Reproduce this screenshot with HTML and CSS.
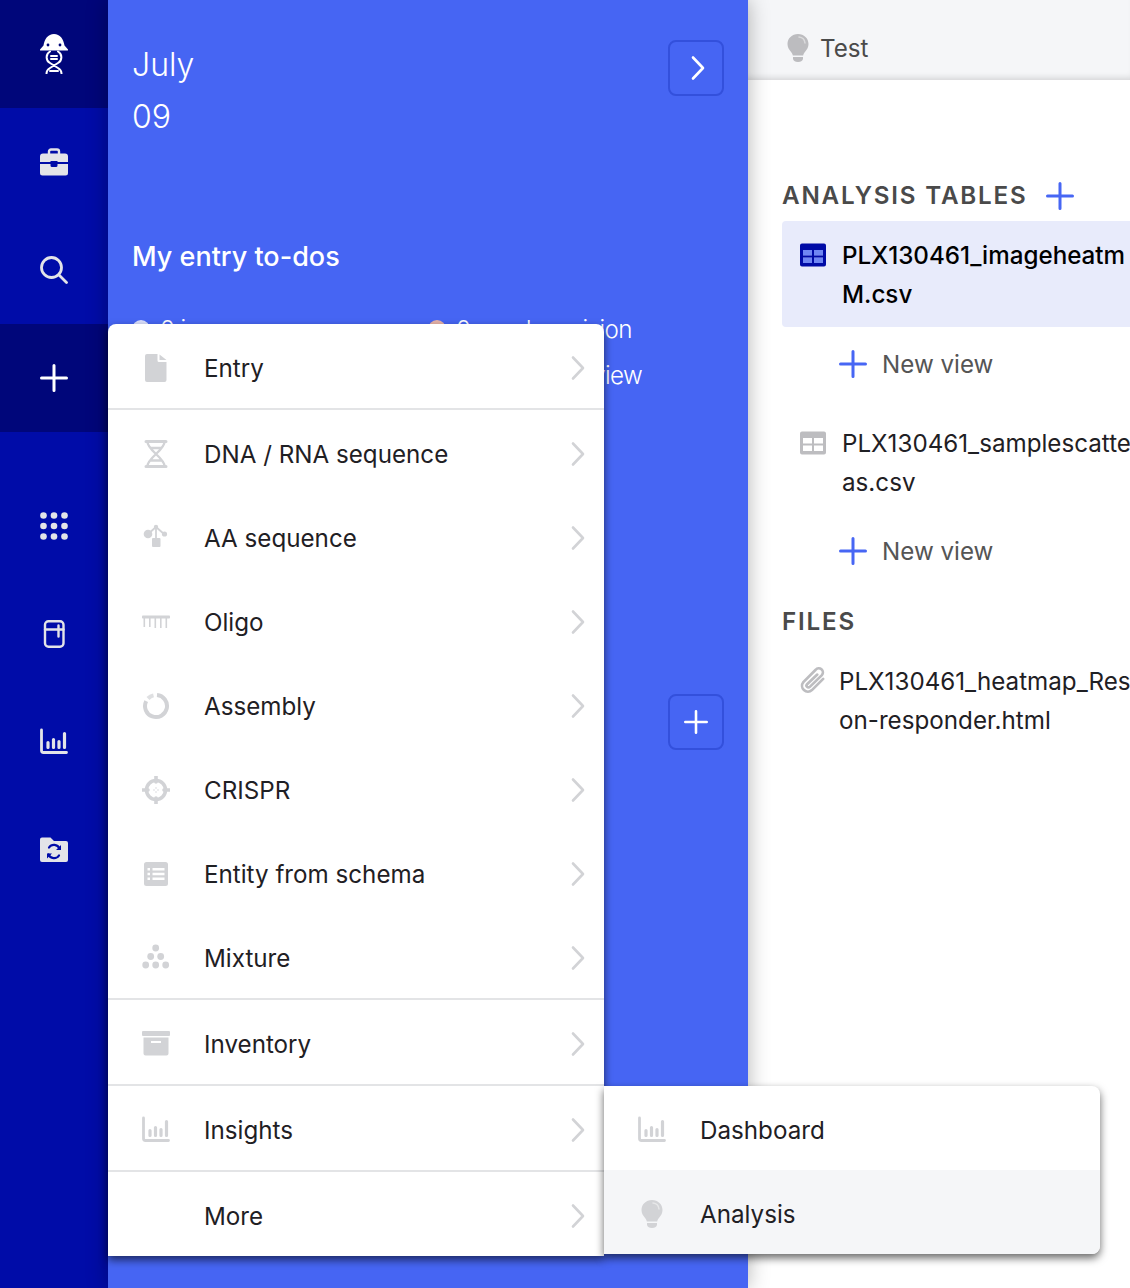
FILE: index.html
```html
<!DOCTYPE html>
<html lang="en">
<head>
<meta charset="utf-8">
<title>Analysis</title>
<link rel="stylesheet" href="styles.css">
</head>
<body>
<svg class="defs" aria-hidden="true">
  <symbol id="chev" viewBox="0 0 28 28"><path d="M9 3.500 19 14 9 24.500" fill="none" stroke="currentColor" stroke-width="2.600" stroke-linecap="round" stroke-linejoin="round"/></symbol>
  <symbol id="plus" viewBox="0 0 28 28"><path d="M14 1.500v25M1.500 14h25" fill="none" stroke="currentColor" stroke-width="3" stroke-linecap="round"/></symbol>
  <symbol id="chart" viewBox="0 0 28 28"><path d="M1.500 2v20.500a2 2 0 0 0 2 2h23" fill="none" stroke="currentColor" stroke-width="2.800" stroke-linecap="round"/><path d="M8 14.500v5M13.500 11.500v8M19 13.500v6M24.500 5.500v14" fill="none" stroke="currentColor" stroke-width="3.200" stroke-linecap="round"/></symbol>
  <symbol id="bulb" viewBox="0 0 28 28"><path d="M14 0c6 0 10.500 4.400 10.500 10 0 3.300-1.500 5.400-3 7.300-1.100 1.400-2 2.700-2.300 4.200H8.800c-.3-1.500-1.200-2.800-2.300-4.200-1.500-1.900-3-4-3-7.300C3.500 4.400 8 0 14 0z" fill="currentColor"/><path d="M9 23h10v1.500c0 2-2 3.500-5 3.500s-5-1.500-5-3.500z" fill="currentColor"/><path d="M15 3c3.300.3 5.700 2.900 6 6" fill="none" stroke="#fff" stroke-opacity=".45" stroke-width="1.500" stroke-linecap="round"/></symbol>
  <symbol id="table" viewBox="0 0 28 28"><path fill-rule="evenodd" d="M3 2.500h22a2 2 0 0 1 2 2v19a2 2 0 0 1-2 2H3a2 2 0 0 1-2-2v-19a2 2 0 0 1 2-2zM4 9v5.500h9V9zm11 0v5.500h9V9zM4 16.500V22h9v-5.500zm11 0V22h9v-5.500z" fill="currentColor"/></symbol>
</svg>

<div class="app">
  <nav class="rail">
    <a class="rail-item dark">
      <svg class="logo" viewBox="0 0 28 40"><path d="M14 0C8 0 4.500 5 3.500 11.500L0 15.500c-.3.500 0 1 .6 1h26.800c.6 0 .9-.5.600-1l-3.500-4C23.500 5 20 0 14 0z" fill="#fff"/><circle cx="8" cy="11" r="1.400" fill="#00067a"/><circle cx="20" cy="11" r="1.400" fill="#00067a"/><path d="M10 17.500C5.500 20 5.500 26.500 10 29l8 5c2.500 1.500 3.500 3 3.500 5.500M18 17.500c4.500 2.500 4.500 9 0 11.500l-8 5c-2.500 1.500-3.500 3-3.500 5.500M11 22h6M11 25h6M10 37h8" fill="none" stroke="#fff" stroke-width="2" stroke-linecap="round"/></svg>
    </a>
    <a class="rail-item">
      <svg class="icon" viewBox="0 0 28 28"><path d="M9 6V3.500a2 2 0 0 1 2-2h6a2 2 0 0 1 2 2V6" fill="none" stroke="currentColor" stroke-width="2.400"/><path d="M3 5.500h22a3 3 0 0 1 3 3V14H17.500v-1h-7v1H0V8.500a3 3 0 0 1 3-3zM0 16h10.500v1.500a1.500 1.500 0 0 0 1.500 1.500h4a1.500 1.500 0 0 0 1.500-1.500V16H28v9a2.500 2.500 0 0 1-2.500 2.500h-23A2.500 2.500 0 0 1 0 25z" fill="currentColor"/></svg>
    </a>
    <a class="rail-item">
      <svg class="icon" viewBox="0 0 28 28"><circle cx="11.500" cy="11.500" r="10" fill="none" stroke="currentColor" stroke-width="2.800"/><path d="M19 19l7.500 7.500" fill="none" stroke="currentColor" stroke-width="2.800" stroke-linecap="round"/></svg>
    </a>
    <a class="rail-item dark">
      <svg class="icon plus-icon"><use href="#plus"/></svg>
    </a>
    <a class="rail-item first-tool">
      <svg class="icon" viewBox="0 0 28 28" fill="currentColor"><circle cx="3.500" cy="3.500" r="3.300"/><circle cx="14" cy="3.500" r="3.300"/><circle cx="24.500" cy="3.500" r="3.300"/><circle cx="3.500" cy="14" r="3.300"/><circle cx="14" cy="14" r="3.300"/><circle cx="24.500" cy="14" r="3.300"/><circle cx="3.500" cy="24.500" r="3.300"/><circle cx="14" cy="24.500" r="3.300"/><circle cx="24.500" cy="24.500" r="3.300"/></svg>
    </a>
    <a class="rail-item">
      <svg class="icon" viewBox="0 0 28 28" fill="none" stroke="currentColor" stroke-width="2.400" stroke-linecap="round"><rect x="5" y="1.200" width="18.500" height="25.600" rx="3.500"/><path d="M5 9.500h18.500M18.500 5.500v11"/></svg>
    </a>
    <a class="rail-item">
      <svg class="icon"><use href="#chart"/></svg>
    </a>
    <a class="rail-item">
      <svg class="icon" viewBox="0 0 28 28"><path d="M2 1.500h8.500l3.500 3.500H26a2 2 0 0 1 2 2V24a2 2 0 0 1-2 2H2a2 2 0 0 1-2-2V3.500a2 2 0 0 1 2-2z" fill="currentColor"/><path d="M19.500 12.500a6 6 0 0 0-10.500-1M8.500 18.500a6 6 0 0 0 10.500 1" fill="none" stroke="#000ca8" stroke-width="2.200" stroke-linecap="round"/><path d="M21 9v5h-5zM7 22.500v-5h5z" fill="#000ca8"/></svg>
    </a>
  </nav>

  <section class="panel">
    <header class="panel-head">
      <div class="date">
        <div>July</div>
        <div>09</div>
      </div>
      <button class="square-btn"><svg class="btn-chev"><use href="#chev"/></svg></button>
    </header>
    <h2 class="todos-title">My entry to-dos</h2>
    <div class="todos">
      <div class="todo"><span class="todo-icon"></span>0 in progress</div>
      <div class="todo"><span class="todo-icon pink"></span>0 needs revision</div>
      <div class="todo"><span class="todo-icon"></span>0 to submit</div>
      <div class="todo"><span class="todo-icon"></span>0 awaiting review</div>
    </div>
    <button class="square-btn add-btn"><svg class="btn-icon"><use href="#plus"/></svg></button>
  </section>

  <main class="detail">
    <div class="topbar">
      <svg class="top-bulb"><use href="#bulb"/></svg>
      <span>Test</span>
    </div>
    <div class="detail-body">
      <h3 class="section first-section">ANALYSIS TABLES <svg class="blue-plus"><use href="#plus"/></svg></h3>
      <div class="file selected">
        <svg class="file-icon" viewBox="0 0 28 28"><rect x="3" y="8" width="22" height="15.500" fill="#6f86f3"/><path d="M14 9v14M4 15.500h20" stroke="#b9c4fa" stroke-width="2"/><use href="#table"/></svg>
        <div class="file-name">PLX130461_imageheatm<br>M.csv</div>
      </div>
      <div class="view"><svg class="blue-plus"><use href="#plus"/></svg><span>New view</span></div>
      <div class="file second">
        <svg class="file-icon"><use href="#table"/></svg>
        <div class="file-name">PLX130461_samplescatte<br>as.csv</div>
      </div>
      <div class="view"><svg class="blue-plus"><use href="#plus"/></svg><span>New view</span></div>
      <h3 class="section files-section">FILES</h3>
      <div class="attachment">
        <svg class="clip" viewBox="0 0 28 28"><path d="M23.500 12 13 22.500a5.500 5.500 0 0 1-8-7.500L16.500 3.500a3.800 3.800 0 0 1 5.800 5L11 19.500a1.500 1.500 0 0 1-2.500-2.500L18 8" fill="none" stroke="currentColor" stroke-width="2.500" stroke-linecap="round"/></svg>
        <div class="file-name">PLX130461_heatmap_Res<br>on-responder.html</div>
      </div>
    </div>
  </main>
</div>

<div class="menu main-menu">
  <div class="menu-group">
    <div class="menu-row">
      <svg class="menu-icon" viewBox="0 0 28 28"><path d="M5 0h10.500v6.500a1.500 1.500 0 0 0 1.500 1.500h7.500v18a2 2 0 0 1-2 2H5a2 2 0 0 1-2-2V2a2 2 0 0 1 2-2zM17.500.5l7 5.500h-7z" fill="currentColor"/></svg>
      <span class="menu-label">Entry</span><svg class="menu-chev"><use href="#chev"/></svg>
    </div>
  </div>
  <div class="menu-group">
    <div class="menu-row">
      <svg class="menu-icon" viewBox="0 0 28 28" fill="none" stroke="currentColor" stroke-linecap="round"><path d="M4 1.500h20M4 26.500h20" stroke-width="3"/><path d="M5.500 2c0 8 17 16 17 24M22.500 2c0 8-17 16-17 24M9 8h10M9 20.500h10" stroke-width="2.400"/></svg>
      <span class="menu-label">DNA / RNA sequence</span><svg class="menu-chev"><use href="#chev"/></svg>
    </div>
    <div class="menu-row">
      <svg class="menu-icon" viewBox="0 0 28 28" fill="currentColor"><path d="M14 3 6 10M14 3v12M14 3l8 7" stroke="currentColor" stroke-width="1.800" fill="none"/><circle cx="6" cy="10" r="4.300"/><circle cx="14" cy="3" r="2.200"/><circle cx="22.500" cy="10" r="2.600"/><rect x="10" y="14" width="8.500" height="9" rx="1"/></svg>
      <span class="menu-label">AA sequence</span><svg class="menu-chev"><use href="#chev"/></svg>
    </div>
    <div class="menu-row">
      <svg class="menu-icon" viewBox="0 0 28 28" fill="currentColor"><rect x="0" y="7.500" width="28" height="3" rx=".8"/><path d="M1.500 10h1.600v9H1.500zM7 10h1.600v9H7zM12.500 10h1.600v10h-1.600zM18 10h1.600v10H18zM23.500 10h1.600v10h-1.600z"/></svg>
      <span class="menu-label">Oligo</span><svg class="menu-chev"><use href="#chev"/></svg>
    </div>
    <div class="menu-row">
      <svg class="menu-icon" viewBox="0 0 28 28" fill="none" stroke="currentColor" stroke-width="4"><path d="M15 3.100a11 11 0 1 1-10.800 6"/><path d="M6 6.500a11 11 0 0 1 5.500-3.100" stroke-opacity=".7"/></svg>
      <span class="menu-label">Assembly</span><svg class="menu-chev"><use href="#chev"/></svg>
    </div>
    <div class="menu-row">
      <svg class="menu-icon" viewBox="0 0 28 28" fill="none" stroke="currentColor"><circle cx="14" cy="14" r="9.500" stroke-width="3.600"/><path d="M14 0v6M14 22v6M0 14h6M22 14h6" stroke-width="3.600" stroke-linecap="round"/><path d="M14 11.500v1M14 15.500v1M11.500 14h1M15.500 14h1" stroke-width="1.500"/></svg>
      <span class="menu-label">CRISPR</span><svg class="menu-chev"><use href="#chev"/></svg>
    </div>
    <div class="menu-row">
      <svg class="menu-icon" viewBox="0 0 28 28"><path fill-rule="evenodd" d="M4.500 2h19A2.500 2.500 0 0 1 26 4.500v19a2.500 2.500 0 0 1-2.500 2.500h-19A2.500 2.500 0 0 1 2 23.500v-19A2.500 2.500 0 0 1 4.500 2zM5.500 8v2.500H8V8zm5 0v2.500h12V8zm-5 4.800v2.500H8v-2.500zm5 0v2.500h12v-2.500zm-5 4.800v2.500H8v-2.500zm5 0v2.500h12v-2.500z" fill="currentColor"/></svg>
      <span class="menu-label">Entity from schema</span><svg class="menu-chev"><use href="#chev"/></svg>
    </div>
    <div class="menu-row">
      <svg class="menu-icon" viewBox="0 0 28 28" fill="currentColor"><circle cx="13.700" cy="4" r="3.400"/><circle cx="8.700" cy="12.500" r="3.400"/><circle cx="18.700" cy="12.500" r="3.400"/><circle cx="3.700" cy="21" r="3.400"/><circle cx="13.700" cy="21" r="3.400"/><circle cx="23.700" cy="21" r="3.400"/></svg>
      <span class="menu-label">Mixture</span><svg class="menu-chev"><use href="#chev"/></svg>
    </div>
  </div>
  <div class="menu-group">
    <div class="menu-row">
      <svg class="menu-icon" viewBox="0 0 28 28"><rect x="0" y="1" width="28" height="5" rx="1" fill="currentColor"/><path fill-rule="evenodd" d="M1.500 7.500h25V23.500a2 2 0 0 1-2 2h-21a2 2 0 0 1-2-2zM9 11v2h10v-2z" fill="currentColor"/></svg>
      <span class="menu-label">Inventory</span><svg class="menu-chev"><use href="#chev"/></svg>
    </div>
  </div>
  <div class="menu-group">
    <div class="menu-row">
      <svg class="menu-icon"><use href="#chart"/></svg>
      <span class="menu-label">Insights</span><svg class="menu-chev"><use href="#chev"/></svg>
    </div>
  </div>
  <div class="menu-group">
    <div class="menu-row">
      <span class="menu-icon"></span>
      <span class="menu-label">More</span><svg class="menu-chev"><use href="#chev"/></svg>
    </div>
  </div>
</div>

<div class="menu sub-menu">
  <div class="menu-row sub-row">
    <svg class="menu-icon"><use href="#chart"/></svg>
    <span class="menu-label">Dashboard</span>
  </div>
  <div class="menu-row sub-row active">
    <svg class="menu-icon"><use href="#bulb"/></svg>
    <span class="menu-label">Analysis</span>
  </div>
</div>
</body>
</html>
```

FILE: styles.css
```css
* { box-sizing: border-box; }

html, body {
  margin: 0;
  height: 1288px;
  overflow: hidden;
}

body {
  font-family: "Inter", "Liberation Sans", sans-serif;
  font-size: 24.200px;
  color: #1f2024;
  position: relative;
}

.defs { position: absolute; width: 0; height: 0; }

.app {
  display: flex;
  width: 1130px;
  height: 1288px;
}

/* left rail */
.rail {
  flex: 0 0 108px;
  background: #000ca8;
  display: flex;
  flex-direction: column;
}

.rail-item {
  height: 108px;
  display: flex;
  align-items: center;
  justify-content: center;
  color: #e3e4e8;
}

.rail-item.dark { background: #00067a; color: #fff; }
.first-tool { margin-top: 40px; }

.icon { width: 28px; height: 28px; display: block; }
.logo { width: 28px; height: 40px; display: block; }

/* blue panel */
.panel {
  flex: 0 0 640px;
  background: #4665f3;
  color: #fff;
  padding: 40px 24px 0;
  display: flex;
  flex-direction: column;
  box-shadow: 0 0 20px rgba(0, 0, 0, .3);
  position: relative;
  z-index: 1;
}

.panel-head {
  display: flex;
  justify-content: space-between;
  align-items: flex-start;
}

.date {
  font-size: 32px;
  font-weight: 300;
  line-height: 52px;
  margin-top: -1px;
}

.square-btn {
  width: 56px;
  height: 56px;
  padding: 0;
  background: transparent;
  border: 2px solid #3350dc;
  border-radius: 8px;
  color: #fff;
  display: flex;
  align-items: center;
  justify-content: center;
}

.btn-icon { width: 24px; height: 24px; }
.btn-chev { width: 28px; height: 28px; margin-left: 4px; }

.todos-title {
  margin: 94px 0 0;
  font-size: 27px;
  font-weight: 500;
  line-height: 40px;
}

.todos {
  margin-top: 29px;
  display: grid;
  grid-template-columns: 296px 1fr;
  grid-auto-rows: 46px;
  align-items: center;
}

.todo {
  display: flex;
  align-items: center;
  gap: 10px;
  font-weight: 300;
  letter-spacing: -.6px;
  white-space: nowrap;
}

.todo-icon {
  width: 18px;
  height: 18px;
  border-radius: 50%;
  background: rgba(255, 255, 255, .8);
}

.todo-icon.pink { background: #e7b3a8; }

.add-btn {
  margin-top: 296px;
  align-self: flex-end;
}

/* right detail */
.detail {
  flex: 1;
  min-width: 0;
  overflow: hidden;
  background: #fff;
  position: relative;
}

.topbar {
  height: 80px;
  background: #f5f6f8;
  box-shadow: inset 0 -6px 6px -4px rgba(0, 0, 0, .14);
  display: flex;
  align-items: center;
  gap: 8px;
  padding: 16px 0 0 36px;
  color: #4a4a4a;
  position: relative;
}

.top-bulb { width: 28px; height: 28px; color: #bcbcbf; flex: none; }

.detail-body { padding-left: 34px; }

.section {
  margin: 0;
  font-size: 24.200px;
  font-weight: 600;
  line-height: 30px;
  letter-spacing: 1.800px;
  color: #4a4a4a;
  display: flex;
  align-items: center;
  gap: 18px;
}

.first-section { margin-top: 101px; margin-bottom: 10px; }
.files-section { margin-top: 28px; margin-bottom: 25px; }

.blue-plus { width: 28px; height: 28px; color: #4766f4; flex: none; }

.file {
  display: flex;
  gap: 15px;
  padding: 15px 0 13px 17px;
  white-space: nowrap;
}

.file.selected {
  background: #e8ebfb;
  border-radius: 4px 0 0 4px;
  font-weight: 500;
  color: #000;
}

.file.second { padding-bottom: 12px; color: #1f2024; }

.file-icon { width: 28px; height: 28px; flex: none; margin-top: 5px; color: #bdbdc0; }
.selected .file-icon { color: #000ba6; }

.file-name { line-height: 39px; }

.view {
  height: 56px;
  margin: 9px 0 17px;
  padding-left: 57px;
  display: flex;
  align-items: center;
  gap: 15px;
  color: #555;
}

.attachment {
  display: flex;
  gap: 11px;
  padding-left: 16px;
  white-space: nowrap;
}

.clip { width: 30px; height: 30px; flex: none; margin-top: 4px; color: #bdbdc0; }

/* fly-out menus */
.menu {
  position: absolute;
  background: #fff;
  width: 496px;
  box-shadow: 0 4px 8px rgba(0, 0, 0, .6);
  z-index: 2;
  overflow: hidden;
}

.main-menu {
  left: 108px;
  top: 324px;
  border-radius: 8px 8px 0 0;
}

.sub-menu {
  left: 604px;
  top: 1086px;
  border-radius: 0 8px 8px 0;
  z-index: 3;
}

.menu-group + .menu-group { border-top: 2px solid #e3e4e6; }

.menu-row {
  height: 84px;
  padding: 4px 12px 0 34px;
  display: flex;
  align-items: center;
  gap: 34px;
}

.menu-icon { width: 28px; height: 28px; flex: none; color: #d2d3d6; display: block; }
.menu-label { flex: 1; }
.menu-chev { width: 28px; height: 28px; flex: none; color: #d2d3d6; }

.sub-row.active { background: #f5f6f8; }
```
